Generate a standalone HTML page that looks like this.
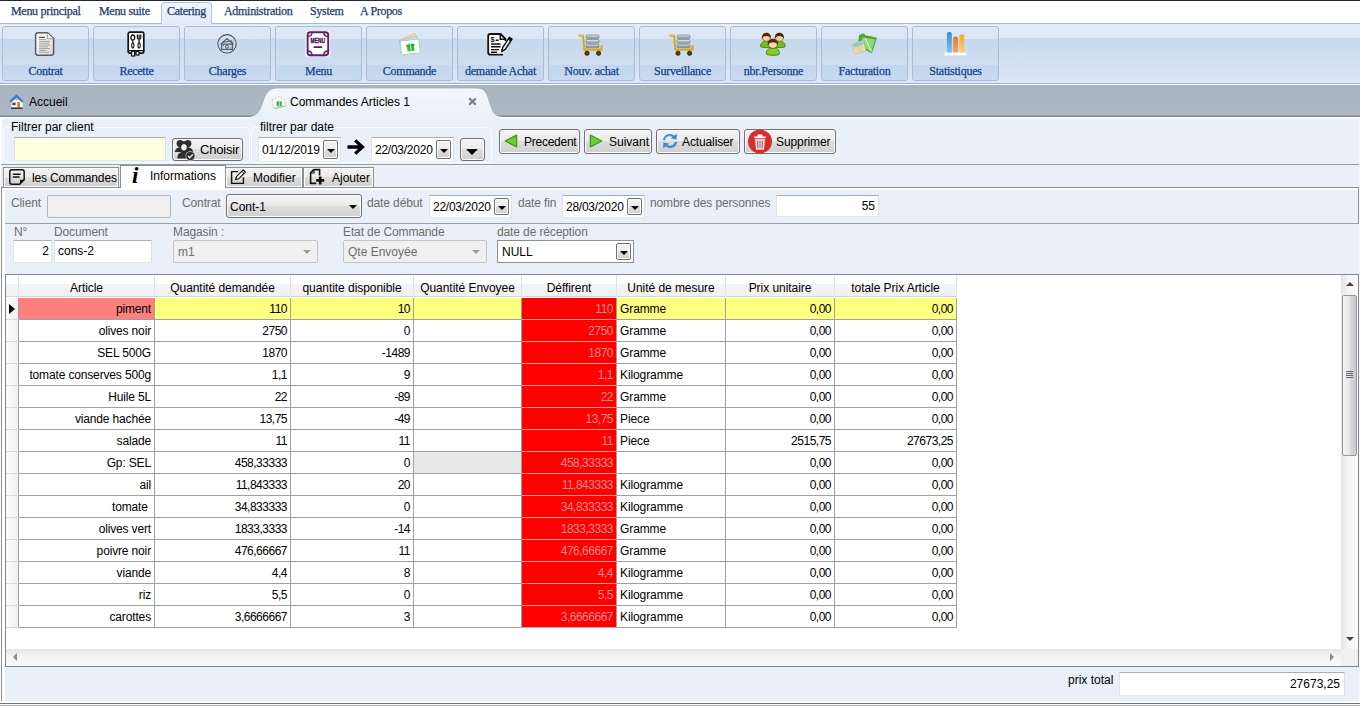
<!DOCTYPE html>
<html lang="fr">
<head>
<meta charset="utf-8">
<title>Commandes Articles 1</title>
<style>
html,body{margin:0;padding:0;}
body{width:1360px;height:706px;overflow:hidden;position:relative;background:#e9f0f9;
 font-family:"Liberation Sans",sans-serif;font-size:12px;color:#000;}
.abs{position:absolute;}
div,span{box-sizing:border-box;}
.t{position:absolute;white-space:nowrap;line-height:16px;height:16px;}

/* ---------- menu bar ---------- */
#topline{left:0;top:0;width:1360px;height:1px;background:#1f2a38;}
#menubar{left:0;top:1px;width:1360px;height:22px;background:#fff;}
.mi{position:absolute;top:3px;font-family:"Liberation Serif",serif;font-size:12px;letter-spacing:-0.3px;color:#1e3a68;-webkit-text-stroke:0.25px #1e3a68;line-height:16px;white-space:nowrap;}
#cattab{left:161px;top:2px;width:51px;height:22px;border:1px solid #b3c4db;border-bottom:none;border-radius:4px 4px 0 0;
 background:linear-gradient(#eef4fb,#e3ecf8);}

/* ---------- ribbon ---------- */
#ribbon{left:0;top:23px;width:1360px;height:61px;border-top:1px solid #a9bad2;border-bottom:1px solid #9fb0cc;
 background:linear-gradient(#e3ebf7 0,#e0e9f6 14px,#c8d9ee 14px,#dbe6f5 59px);}
.grp{position:absolute;top:26px;width:87px;height:55px;border:1px solid #abbdd6;border-radius:3px;overflow:hidden;
 background:linear-gradient(#dfe8f5 0,#dae5f4 12px,#c7d8ec 12px,#cfdef0 38px,#c2d6ee 38px,#c8daf0 53px);}
.grp .lbl{position:absolute;left:0;width:100%;top:36px;text-align:center;font-family:"Liberation Serif",serif;font-size:12px;letter-spacing:-0.25px;color:#15428b;-webkit-text-stroke:0.25px #15428b;line-height:16px;white-space:nowrap;}
.grp svg{position:absolute;}

/* ---------- doc tab strip ---------- */
#strip{left:0;top:84px;width:1360px;height:35px;background:linear-gradient(#fafdfd 0,#fafdfd 1px,#a9b4c0 1px,#adb8c5 31px,#7f8994 32px,#7f8994 33px,#fbfdff 33px);}
</style>
</head>
<body>

<div class="abs" id="menubar"></div>
<div class="abs" id="topline"></div>
<div class="abs" id="ribbon"></div>
<div class="abs" id="cattab"></div>
<span class="mi" style="left:11px;top:3px">Menu principal</span>
<span class="mi" style="left:99px;top:3px">Menu suite</span>
<span class="mi" style="left:167px;top:3px">Catering</span>
<span class="mi" style="left:224px;top:3px">Administration</span>
<span class="mi" style="left:310px;top:3px">System</span>
<span class="mi" style="left:360px;top:3px">A Propos</span>

<!-- ribbon groups -->
<div class="grp" style="left:2px"><div class="lbl">Contrat</div></div>
<div class="grp" style="left:93px"><div class="lbl">Recette</div></div>
<div class="grp" style="left:184px"><div class="lbl">Charges</div></div>
<div class="grp" style="left:275px"><div class="lbl">Menu</div></div>
<div class="grp" style="left:366px"><div class="lbl">Commande</div></div>
<div class="grp" style="left:457px"><div class="lbl">demande Achat</div></div>
<div class="grp" style="left:548px"><div class="lbl">Nouv. achat</div></div>
<div class="grp" style="left:639px"><div class="lbl">Surveillance</div></div>
<div class="grp" style="left:730px"><div class="lbl">nbr.Personne</div></div>
<div class="grp" style="left:821px"><div class="lbl">Facturation</div></div>
<div class="grp" style="left:912px"><div class="lbl">Statistiques</div></div>


<!-- ribbon icons -->
<svg class="abs" style="left:34px;top:31px" width="22" height="26" viewBox="0 0 22 26">
 <defs><linearGradient id="dg" x1="0" y1="0" x2="1" y2="1"><stop offset="0" stop-color="#ffffff"/><stop offset="1" stop-color="#d9d9d9"/></linearGradient></defs>
 <path d="M4,1.8 L13.6,1.8 L19.6,7.6 L19.6,21.8 C19.6,23.4 18.8,24.2 17.2,24.2 L4,24.2 C2.4,24.2 1.6,23.4 1.6,21.8 L1.6,4.2 C1.6,2.6 2.4,1.8 4,1.8 Z" fill="url(#dg)" stroke="#5b5b5b" stroke-width="1.5"/>
 <path d="M13.4,2 L13.4,7.8 L19.4,7.8" fill="#ededed" stroke="#8a8a8a" stroke-width="0.8"/>
 <g stroke="#9c9c9c" stroke-width="0.9">
  <path d="M5,6.4 L11,6.4" stroke="#555" stroke-width="1.2"/>
  <path d="M5,8.6 L12,8.6 M5,10.4 L16,10.4 M5,12.2 L15,12.2 M5,14 L16,14 M5,15.8 L14,15.8 M5,17.6 L16,17.6 M5,19.4 L12,19.4 M5,21.2 L15,21.2"/>
 </g>
</svg>
<svg class="abs" style="left:126px;top:30px" width="20" height="28" viewBox="0 0 20 28">
 <rect x="2.2" y="2.2" width="15.6" height="21" rx="1.6" fill="#fdfdfd" stroke="#111" stroke-width="1.7"/>
 <path d="M2.4,20.6 L17.6,20.6" stroke="#111" stroke-width="1.2"/>
 <rect x="5.6" y="21.4" width="3" height="4.6" fill="#fdfdfd" stroke="#111" stroke-width="1.2"/>
 <rect x="10" y="21.4" width="3" height="3.6" fill="#fdfdfd" stroke="#111" stroke-width="1.2"/>
 <ellipse cx="6.8" cy="7.6" rx="1.9" ry="2.6" fill="none" stroke="#111" stroke-width="1.3"/>
 <path d="M6.8,10.4 L6.8,13" stroke="#111" stroke-width="1.2"/>
 <ellipse cx="6.8" cy="15.4" rx="1.1" ry="2.6" fill="none" stroke="#111" stroke-width="1.1"/>
 <path d="M11.4,4.6 L11.4,8 C11.4,9.6 14.8,9.6 14.8,8 L14.8,4.6 M13.1,4.6 L13.1,13" fill="none" stroke="#111" stroke-width="1.2"/>
 <ellipse cx="13.1" cy="15.4" rx="1.1" ry="2.6" fill="none" stroke="#111" stroke-width="1.1"/>
</svg>
<svg class="abs" style="left:216px;top:33px" width="22" height="22" viewBox="0 0 22 22">
 <circle cx="11" cy="10.8" r="9.2" fill="none" stroke="#4e545c" stroke-width="1.1"/>
 <path d="M4.6,11.4 L11,5.6 L17.4,11.4" fill="none" stroke="#4e545c" stroke-width="1.1"/>
 <path d="M6.2,9.6 L15.8,7.8 L16.6,12" fill="none" stroke="#4e545c" stroke-width="0.9"/>
 <rect x="5.6" y="11.2" width="10.8" height="5.2" fill="none" stroke="#4e545c" stroke-width="1.1"/>
 <circle cx="11" cy="13.8" r="1.5" fill="none" stroke="#4e545c" stroke-width="0.9"/>
 <path d="M7,12.6 L8,12.6 M14,15 L15,15" stroke="#4e545c" stroke-width="0.9"/>
</svg>
<svg class="abs" style="left:305px;top:30px" width="26" height="28" viewBox="0 0 26 28">
 <rect x="0.6" y="1" width="24.6" height="25.4" fill="#fff"/>
 <rect x="2.6" y="2.2" width="20.6" height="23" rx="2.6" fill="#fff" stroke="#5d1f5d" stroke-width="1.9"/>
 <path d="M2.8,6.4 C5.6,6.4 7,5 7,2.4 M23,6.4 C20.2,6.4 18.8,5 18.8,2.4 M2.8,21 C5.6,21 7,22.4 7,25 M23,21 C20.2,21 18.8,22.4 18.8,25" fill="#c9a3c9" stroke="#5d1f5d" stroke-width="1.3"/>
 <text x="12.9" y="13.2" text-anchor="middle" font-family="Liberation Sans, sans-serif" font-weight="bold" font-size="7" fill="#4a154a" stroke="#4a154a" stroke-width="0.35" textLength="14.6" lengthAdjust="spacingAndGlyphs">MENU</text>
 <rect x="8.6" y="16.2" width="8.6" height="1.8" fill="#5d1f5d"/>
</svg>
<svg class="abs" style="left:396px;top:32px" width="28" height="26" viewBox="0 0 28 26">
 <g transform="rotate(-24 14 12)"><rect x="5" y="4.4" width="18" height="13.2" rx="1.6" fill="#ffd9a8" stroke="#f0b56c" stroke-width="0.8"/></g>
 <g transform="rotate(-14 14 13)"><rect x="5" y="6" width="18" height="13.2" rx="1.6" fill="#bfe3f2" stroke="#8cc6e0" stroke-width="0.8"/></g>
 <g transform="rotate(-7 14 14)"><rect x="4.6" y="8" width="19" height="14" rx="1.8" fill="#fff" stroke="#9bd8a2" stroke-width="0.9"/>
  <rect x="11" y="12.8" width="7" height="6.4" fill="#3db54a"/>
  <rect x="10.4" y="12.2" width="8.2" height="2" fill="#2fa23c"/>
  <rect x="14" y="12.2" width="1" height="7" fill="#b7ecbc"/>
  <path d="M14.5,12.2 C12.6,10 11.8,11.8 14.5,12.2 C17.2,11.8 16.4,10 14.5,12.2" fill="#3db54a"/>
 </g>
</svg>
<svg class="abs" style="left:486px;top:32px" width="28" height="26" viewBox="0 0 28 26">
 <path d="M17,22.6 L4.4,22.6 C3,22.6 2.2,21.8 2.2,20.4 L2.2,4.2 C2.2,2.8 3,2 4.4,2 L14.6,2 L19.4,6.8 L19.4,9" fill="#fff" stroke="#111" stroke-width="1.8" stroke-linejoin="round"/>
 <path d="M14.2,2.2 L14.2,7.2 L19.2,7.2" fill="none" stroke="#111" stroke-width="1.4"/>
 <text x="4.4" y="9.6" font-family="Liberation Sans, sans-serif" font-weight="bold" font-size="7.4" fill="#111">$</text>
 <path d="M9.6,8.2 L12.6,8.2 M5,12 L14.6,12 M5,14.8 L14.6,14.8 M5,17.6 L13,17.6 M5,20.2 L11,20.2" stroke="#111" stroke-width="1.4"/>
 <path d="M15.6,19.6 L16.8,15.4 L23.4,5.4 L26,7.2 L19.4,17.2 Z" fill="#fff" stroke="#111" stroke-width="1.5" stroke-linejoin="round"/>
 <path d="M21.8,7.6 L24.4,9.4 L25.8,7.2 L23.2,5.4 Z" fill="#111"/>
</svg>
<svg class="abs" style="left:578px;top:33px" width="26" height="24" viewBox="0 0 26 24">
 <rect x="8" y="2" width="13" height="3.6" rx="1" fill="#9aa4a8" stroke="#6f7a7e" stroke-width="0.6"/>
 <rect x="8" y="6.6" width="13" height="3.6" rx="1" fill="#aab3b7" stroke="#6f7a7e" stroke-width="0.6"/>
 <rect x="8" y="11.2" width="13" height="3.6" rx="1" fill="#8f999d" stroke="#6f7a7e" stroke-width="0.6"/>
 <path d="M8.4,3 L20.6,3 M8.4,7.6 L20.6,7.6 M8.4,12.2 L20.6,12.2" stroke="#dfe5e7" stroke-width="0.9"/>
 <path d="M1.4,2.6 L5,2.6 L6.4,16.6 L23.6,16.6 L23.6,13" fill="none" stroke="#d8a927" stroke-width="2.1" stroke-linejoin="round" stroke-linecap="round"/>
 <path d="M1.4,2.2 L5,2.2" stroke="#f3d56b" stroke-width="0.8"/>
 <circle cx="9" cy="20.2" r="2.2" fill="#5a3a12" stroke="#2e1d08" stroke-width="0.6"/>
 <circle cx="20.6" cy="20.2" r="2.2" fill="#5a3a12" stroke="#2e1d08" stroke-width="0.6"/>
</svg>
<svg class="abs" style="left:669px;top:33px" width="26" height="24" viewBox="0 0 26 24">
 <rect x="8" y="2" width="13" height="3.6" rx="1" fill="#9aa4a8" stroke="#6f7a7e" stroke-width="0.6"/>
 <rect x="8" y="6.6" width="13" height="3.6" rx="1" fill="#aab3b7" stroke="#6f7a7e" stroke-width="0.6"/>
 <rect x="8" y="11.2" width="13" height="3.6" rx="1" fill="#8f999d" stroke="#6f7a7e" stroke-width="0.6"/>
 <path d="M8.4,3 L20.6,3 M8.4,7.6 L20.6,7.6 M8.4,12.2 L20.6,12.2" stroke="#dfe5e7" stroke-width="0.9"/>
 <path d="M1.4,2.6 L5,2.6 L6.4,16.6 L23.6,16.6 L23.6,13" fill="none" stroke="#d8a927" stroke-width="2.1" stroke-linejoin="round" stroke-linecap="round"/>
 <path d="M1.4,2.2 L5,2.2" stroke="#f3d56b" stroke-width="0.8"/>
 <circle cx="9" cy="20.2" r="2.2" fill="#5a3a12" stroke="#2e1d08" stroke-width="0.6"/>
 <circle cx="20.6" cy="20.2" r="2.2" fill="#5a3a12" stroke="#2e1d08" stroke-width="0.6"/>
</svg>
<svg class="abs" style="left:759px;top:31px" width="28" height="26" viewBox="0 0 28 26">
 <g>
  <path d="M1.6,15.4 C1.6,11.6 4,10.4 7.4,10.4 C10.8,10.4 13.2,11.6 13.2,15.4 C13.2,17 1.6,17 1.6,15.4 Z" fill="#6fbf1f" stroke="#3f7d0c" stroke-width="0.9"/>
  <circle cx="7.4" cy="6.4" r="4" fill="#f6cf9c" stroke="#7a4a1a" stroke-width="0.6"/>
  <path d="M2.8,8 C1.8,-0.2 13,-0.2 12,8 C11.2,5.8 9.6,5 7.4,5 C5.2,5 3.6,5.8 2.8,8 Z" fill="#4a2c0a"/>
 </g>
 <g>
  <path d="M14.6,15.4 C14.6,11.6 17,10.4 20.4,10.4 C23.8,10.4 26.2,11.6 26.2,15.4 C26.2,17 14.6,17 14.6,15.4 Z" fill="#6fbf1f" stroke="#3f7d0c" stroke-width="0.9"/>
  <circle cx="20.4" cy="6.4" r="4" fill="#f6cf9c" stroke="#7a4a1a" stroke-width="0.6"/>
  <path d="M15.8,8 C14.8,-0.2 26,-0.2 25,8 C24.2,5.8 22.6,5 20.4,5 C18.2,5 16.6,5.8 15.8,8 Z" fill="#4a2c0a"/>
 </g>
 <g>
  <path d="M7.4,22.8 C7.4,18.4 10,17 13.9,17 C17.8,17 20.4,18.4 20.4,22.8 C20.4,24.8 7.4,24.8 7.4,22.8 Z" fill="#7fd026" stroke="#3f7d0c" stroke-width="0.9"/>
  <circle cx="13.9" cy="12.8" r="4.5" fill="#fbd9ab" stroke="#7a4a1a" stroke-width="0.6"/>
  <path d="M8.8,14.6 C7.6,5.6 20.2,5.6 19,14.6 C18,12 16.2,11.2 13.9,11.2 C11.6,11.2 9.8,12 8.8,14.6 Z" fill="#4a2c0a"/>
 </g>
</svg>
<svg class="abs" style="left:850px;top:33px" width="28" height="22" viewBox="0 0 28 22">
 <path d="M9.4,2.4 L13.4,0.8 L15.4,2.8 L26.4,5 L21.6,19.6 L8.4,13.4 Z" fill="#4cae3c" stroke="#2e8a24" stroke-width="0.7"/>
 <path d="M12.6,4.4 L25.4,6.6 L21.4,18.6 L10.6,13.4 Z" fill="#8fd870"/>
 <path d="M15,5 L21.4,18.6" stroke="#e9f7df" stroke-width="1"/>
 <g transform="translate(1.2 3.6) scale(0.84) rotate(-18 9 13)">
  <rect x="2.4" y="6.6" width="13.6" height="12.6" rx="1.2" fill="#f0e3b4" stroke="#c9b77a" stroke-width="0.7"/>
  <rect x="4" y="8" width="10.4" height="2.8" fill="#8fd0e6" stroke="#5aa7c2" stroke-width="0.5"/>
  <path d="M4,12.6 L14.4,12.6 M4,14.8 L14.4,14.8 M4,17 L14.4,17 M6.6,11.6 L6.6,18.4 M9.2,11.6 L9.2,18.4 M11.8,11.6 L11.8,18.4" stroke="#d7c588" stroke-width="0.6"/>
 </g>
</svg>
<svg class="abs" style="left:942px;top:30px" width="28" height="28" viewBox="0 0 28 28">
 <defs>
  <linearGradient id="b1" x1="0" y1="0" x2="0" y2="1"><stop offset="0" stop-color="#2f8fe0"/><stop offset="1" stop-color="#7cc3f3"/></linearGradient>
  <linearGradient id="b2" x1="0" y1="0" x2="0" y2="1"><stop offset="0" stop-color="#f0722f"/><stop offset="1" stop-color="#f7a86a"/></linearGradient>
  <linearGradient id="b3" x1="0" y1="0" x2="0" y2="1"><stop offset="0" stop-color="#f7a823"/><stop offset="1" stop-color="#fbd27a"/></linearGradient>
 </defs>
 <rect x="2.4" y="22.6" width="22.4" height="2.8" rx="1" fill="#fdfdfd" stroke="#dfe3e8" stroke-width="0.5"/>
 <rect x="5" y="2" width="4.8" height="20.6" rx="1.6" fill="url(#b1)"/>
 <rect x="11.2" y="6.6" width="4.8" height="16" rx="1.6" fill="url(#b2)"/>
 <rect x="17.4" y="4.6" width="4.8" height="18" rx="1.6" fill="url(#b3)"/>
</svg>

<div class="abs" id="strip"></div>


<style>
/* ---------- generic widgets ---------- */
.gb{position:absolute;border:1px solid #fafcff;border-radius:4px;}
.gbl{position:absolute;background:#e9f0f9;padding:0 2px;line-height:15px;white-space:nowrap;}
.inp{position:absolute;background:#fff;border:1px solid #abadb3;border-color:#abadb3 #dbdfe6 #e3e9ef #e2e3ea;line-height:15px;white-space:nowrap;}
.btn{position:absolute;border:1px solid #707070;border-radius:3px;background:linear-gradient(#f2f2f2 0,#ebebeb 50%,#dddddd 50%,#cfcfcf 100%);
 box-shadow:inset 0 0 0 1px #fcfcfc;line-height:15px;white-space:nowrap;}
.btn .bt{position:absolute;top:5px;}
.dd{position:absolute;border:1px solid #707070;border-radius:2px;background:linear-gradient(#f2f2f2 0,#ebebeb 50%,#dddddd 50%,#cfcfcf 100%);box-shadow:inset 0 0 0 1px #fcfcfc;}
.dd:after{content:"";position:absolute;left:50%;top:50%;margin:-1px 0 0 -4px;border:4px solid transparent;border-top:4px solid #000;border-bottom:none;width:0;height:0;}
.lab{position:absolute;color:#6d6d6d;white-space:nowrap;line-height:15px;letter-spacing:-0.12px;}
.stab{position:absolute;top:167px;height:20px;border:1px solid #8e8f8f;border-bottom:none;background:linear-gradient(#f2f2f2 0,#ebebeb 50%,#dddddd 50%,#cfcfcf 100%);box-shadow:inset 0 0 0 1px #fcfcfc;line-height:15px;white-space:nowrap;}
.stab span{position:absolute;top:3px;}
</style>

<!-- document tabs -->
<svg class="abs" style="left:240px;top:84px" width="280" height="35" viewBox="240 84 280 35">
 <defs><linearGradient id="tg" x1="0" y1="0" x2="0" y2="1"><stop offset="0" stop-color="#f3f7fc"/><stop offset="1" stop-color="#e9f0f9"/></linearGradient></defs>
 <path d="M248,117.5 C259,117.5 261.5,109 263.7,102.6 C266,96 267.5,89 277,89 L476.5,89 C486,89 486.5,96 488.6,102.6 C490.8,109 492,117.5 503,117.5 Z" fill="url(#tg)" stroke="#f8fbfe" stroke-width="1"/>
 <rect x="250" y="117" width="250" height="2" fill="#eaf1fa"/>
</svg>
<span class="t" style="left:29px;top:94px">Accueil</span>
<span class="t" style="left:290px;top:94px">Commandes Articles 1</span>
<svg class="abs" style="left:468px;top:97px" width="9" height="9" viewBox="0 0 9 9"><path d="M1.2,1.2 L7.8,7.8 M7.8,1.2 L1.2,7.8" stroke="#7d7d7d" stroke-width="2.1" fill="none"/></svg>


<!-- filter bar -->
<div class="gb" style="left:3px;top:127px;width:247px;height:36px"></div>
<span class="gbl" style="left:9px;top:120px">Filtrer par client</span>
<div class="inp" style="left:14px;top:137px;width:152px;height:24px;background:#ffffe1"></div>
<div class="btn" style="left:172px;top:138px;width:71px;height:23px"><span class="bt" style="left:27px;top:3px;font-size:13px;letter-spacing:-0.2px">Choisir</span></div>

<div class="gb" style="left:251px;top:127px;width:241px;height:36px"></div>
<span class="gbl" style="left:258px;top:120px">filtrer par date</span>
<div class="inp" style="left:258px;top:137px;width:83px;height:25px"><span class="abs" style="left:3px;top:5px;letter-spacing:-0.25px">01/12/2019</span></div>
<div class="dd" style="left:323px;top:140px;width:15px;height:19px"></div>
<div class="inp" style="left:371px;top:137px;width:83px;height:25px"><span class="abs" style="left:3px;top:5px;letter-spacing:-0.25px">22/03/2020</span></div>
<div class="dd" style="left:436px;top:140px;width:15px;height:19px"></div>
<div class="btn" style="left:460px;top:138px;width:25px;height:23px"></div>
<div class="abs" style="left:466px;top:149px;width:0;height:0;border:6px solid transparent;border-top:6px solid #000;border-bottom:none"></div>

<div class="btn" style="left:499px;top:129px;width:81px;height:25px"><span class="bt" style="left:24px;letter-spacing:-0.25px">Precedent</span></div>
<div class="btn" style="left:584px;top:129px;width:68px;height:25px"><span class="bt" style="left:24px">Suivant</span></div>
<div class="btn" style="left:656px;top:129px;width:84px;height:25px"><span class="bt" style="left:25px;letter-spacing:-0.12px">Actualiser</span></div>
<div class="btn" style="left:744px;top:129px;width:92px;height:25px"><span class="bt" style="left:31px;letter-spacing:-0.1px">Supprimer</span></div>

<div class="abs" style="left:1px;top:164px;width:1359px;height:1px;background:#9b9fa5"></div>

<!-- sub tabs -->
<div class="abs" style="left:1px;top:187px;width:1358px;height:1px;background:#8e8f8f"></div>
<div class="stab" style="left:3px;width:116px"><span style="left:28px;letter-spacing:-0.15px">les Commandes</span></div>
<div class="stab" style="left:225px;width:78px"><span style="left:27px">Modifier</span></div>
<div class="stab" style="left:303px;width:71px"><span style="left:28px">Ajouter</span></div>
<div class="stab" style="left:120px;top:165px;width:106px;height:23px;background:#fff;box-shadow:none"><span style="left:29px;top:3px">Informations</span></div>

<!-- icons: tab strip -->
<svg class="abs" style="left:9px;top:94px" width="16" height="16" viewBox="0 0 16 16">
 <rect x="2.5" y="6" width="11" height="7.5" fill="#fdfdfd"/>
 <path d="M1.2,8 L7.5,1.8 L13.8,8" fill="none" stroke="#3b78cc" stroke-width="2.2" stroke-linejoin="miter"/>
 <rect x="3.3" y="8.6" width="3.4" height="2.6" fill="#4a4f57"/>
 <rect x="8.3" y="8" width="2.8" height="5.6" fill="#c9822a"/>
 <rect x="2" y="13.6" width="11.6" height="1.2" fill="#1b1b1b"/>
</svg>
<svg class="abs" style="left:270px;top:95px" width="17" height="15" viewBox="0 0 17 15">
 <path d="M2,5 L9,1.5 L14.5,4.5 L15.5,11 L5,13.5 L3,12 Z" fill="#fff" stroke="#e9b98a" stroke-width="0.9" stroke-dasharray="2 1.2"/>
 <path d="M3.2,11.8 L5,13.5 L15.5,11" fill="none" stroke="#7fcf8b" stroke-width="1"/>
 <rect x="6.6" y="6.3" width="5.2" height="5" fill="#34b44a"/>
 <rect x="8.8" y="6.3" width="0.9" height="5" fill="#bff0c6"/>
</svg>

<!-- Choisir icon -->
<svg class="abs" style="left:174px;top:139px" width="22" height="22" viewBox="0 0 22 22">
 <g fill="#2e2e2e">
  <circle cx="6.2" cy="4.6" r="3.6"/><circle cx="13.8" cy="4.6" r="3.6"/>
  <path d="M0.8,12.4 C2,9 4.5,8.4 6.4,8 L13.6,8 C15.5,8.4 18,9 19.2,12.4 L19.2,13 L0.8,13 Z"/>
  <path d="M3.4,19.4 C3.4,15 5.6,13.2 10,12.6 C14.4,13.2 16.6,15 16.6,19.4 Z"/>
  <circle cx="10" cy="6.6" r="4.3"/>
 </g>
 <ellipse cx="10" cy="8.2" rx="2.7" ry="3.3" fill="#f1f1f1"/>
 <path d="M5.6,6.4 C6,2.6 14,2.6 14.4,6.4 C12.6,5.6 11.4,4.8 10,4.9 C8.6,4.8 7.4,5.6 5.6,6.4 Z" fill="#2e2e2e"/>
 <circle cx="16.4" cy="17" r="4.6" fill="#2e2e2e" stroke="#e9e9e9" stroke-width="0.6"/>
 <path d="M14.1,17 L15.8,18.8 L18.9,15.4" fill="none" stroke="#f4f4f4" stroke-width="1.3"/>
</svg>

<!-- arrow between dates -->
<svg class="abs" style="left:346px;top:138px" width="20" height="18" viewBox="0 0 20 18">
 <path d="M1.5,9 L14.6,9 M9.2,2.4 L16.4,9 L9.2,15.6" fill="none" stroke="#000" stroke-width="3.3" stroke-linejoin="miter"/>
</svg>

<!-- toolbar button icons -->
<svg class="abs" style="left:503px;top:133px" width="16" height="16" viewBox="0 0 16 16">
 <path d="M2.2,8 L13.6,2.2 L13.6,13.8 Z" fill="#6fce35" stroke="#3f9d1d" stroke-width="1.3" stroke-linejoin="round"/>
</svg>
<svg class="abs" style="left:588px;top:133px" width="16" height="16" viewBox="0 0 16 16">
 <path d="M13.8,8 L2.4,2.2 L2.4,13.8 Z" fill="#6fce35" stroke="#3f9d1d" stroke-width="1.3" stroke-linejoin="round"/>
</svg>
<svg class="abs" style="left:661px;top:132px" width="18" height="18" viewBox="0 0 18 18">
 <g fill="none" stroke="#3f86d6" stroke-width="2.3">
  <path d="M3,8.2 C3.4,4.6 6.6,2.8 9.6,3.2 C11.4,3.5 12.6,4.4 13.4,5.4"/>
  <path d="M15,9.8 C14.6,13.4 11.4,15.2 8.4,14.8 C6.6,14.5 5.4,13.6 4.6,12.6"/>
 </g>
 <path d="M15.8,1.6 L15.6,7.6 L9.8,6.6 Z" fill="#3f86d6"/>
 <path d="M2.2,16.4 L2.4,10.4 L8.2,11.4 Z" fill="#3f86d6"/>
 <path d="M4,7 C5,4.6 7.4,3.8 9.2,4" fill="none" stroke="#b9d7f5" stroke-width="0.8"/>
</svg>
<svg class="abs" style="left:747px;top:129px" width="26" height="26" viewBox="0 0 26 26">
 <circle cx="13" cy="12.6" r="12" fill="#d32f2f"/>
 <path d="M7.2,7.6 L18.8,7.6 L18.8,9.2 L7.2,9.2 Z M10.6,5.6 L15.4,5.6 L15.4,7.6 L10.6,7.6 Z" fill="#fff"/>
 <path d="M8.2,10.2 L17.8,10.2 L17,20.6 L9,20.6 Z" fill="#fff"/>
 <path d="M10.6,11.6 L10.9,19.2 M13,11.6 L13,19.2 M15.4,11.6 L15.1,19.2" stroke="#d32f2f" stroke-width="1.1" fill="none"/>
</svg>

<!-- sub-tab icons -->
<svg class="abs" style="left:8px;top:168px" width="18" height="18" viewBox="0 0 18 18">
 <path d="M4,1.8 L14,1.8 C15.4,1.8 16.2,2.6 16.2,4 L16.2,11.6 L11.6,16.2 L4,16.2 C2.6,16.2 1.8,15.4 1.8,14 L1.8,4 C1.8,2.6 2.6,1.8 4,1.8 Z" fill="none" stroke="#111" stroke-width="1.5"/>
 <path d="M16.2,11.8 L12,11.8 L12,16 Z" fill="#111"/>
 <path d="M4.8,6.2 L12.6,6.2 M4.8,9 L11.6,9" stroke="#111" stroke-width="1.4"/>
</svg>
<span class="abs" style="left:132px;top:164px;font-family:'Liberation Serif',serif;font-weight:bold;font-style:italic;font-size:23px;line-height:24px;color:#000">i</span>
<svg class="abs" style="left:230px;top:169px" width="17" height="16" viewBox="0 0 17 16">
 <path d="M8,2.6 L1.6,2.6 L1.6,14.4 L13.4,14.4 L13.4,8.6" fill="none" stroke="#111" stroke-width="1.4"/>
 <path d="M5.6,10.6 L6.4,7.6 L13.2,0.8 L15.4,3 L8.6,9.8 Z" fill="#fff" stroke="#111" stroke-width="1.1" stroke-linejoin="round"/>
 <path d="M11.8,2.2 L14,4.4" stroke="#111" stroke-width="0.9"/>
</svg>
<svg class="abs" style="left:308px;top:168px" width="18" height="18" viewBox="0 0 18 18">
 <path d="M8.2,15.4 L2.6,15.4 L2.6,4.8 L5.8,1.6 L11.6,1.6 L11.6,7.6" fill="none" stroke="#111" stroke-width="1.6" stroke-linejoin="round"/>
 <path d="M2.8,5 L6,5 L6,1.8" fill="none" stroke="#111" stroke-width="1.2"/>
 <path d="M12.2,8.4 L12.2,16.4 M8.2,12.4 L16.2,12.4" stroke="#111" stroke-width="2.6"/>
</svg>

<div class="abs" style="left:0;top:119px;width:1px;height:584px;background:#fff"></div>
<div class="abs" style="left:1px;top:119px;width:1px;height:45px;background:#fff"></div>
<!-- info panel -->
<div class="abs" style="left:2px;top:188px;width:1356px;height:2px;background:#fff"></div>
<div class="abs" style="left:1px;top:187px;width:1px;height:517px;background:#8e8f8f"></div>
<div class="abs" style="left:2px;top:188px;width:3px;height:515px;background:#fff"></div>
<div class="abs" style="left:1358px;top:187px;width:1px;height:37px;background:#8e8f8f"></div>
<div class="abs" style="left:1359px;top:117px;width:1px;height:589px;background:#f6f8fb"></div>
<div class="lab" style="left:11px;top:196px">Client</div>
<div class="inp" style="left:47px;top:195px;width:124px;height:23px;background:#f0f0f0;border-color:#b5b5b5;border-radius:2px"></div>
<div class="lab" style="left:182px;top:196px">Contrat</div>
<div class="btn" style="left:226px;top:194px;width:136px;height:24px;border-radius:3px"><span class="bt" style="left:3px;top:5px">Cont-1</span></div>
<div class="abs" style="left:349px;top:205px;width:0;height:0;border:4px solid transparent;border-top:4px solid #000;border-bottom:none"></div>
<div class="lab" style="left:367px;top:196px">date début</div>
<div class="inp" style="left:429px;top:195px;width:83px;height:23px"><span class="abs" style="left:3px;top:4px;letter-spacing:-0.25px">22/03/2020</span></div>
<div class="dd" style="left:494px;top:198px;width:15px;height:17px"></div>
<div class="lab" style="left:518px;top:196px">date fin</div>
<div class="inp" style="left:562px;top:195px;width:83px;height:23px"><span class="abs" style="left:3px;top:4px;letter-spacing:-0.25px">28/03/2020</span></div>
<div class="dd" style="left:627px;top:198px;width:15px;height:17px"></div>
<div class="lab" style="left:650px;top:196px">nombre des personnes</div>
<div class="inp" style="left:776px;top:195px;width:103px;height:22px"><span class="abs" style="right:3px;top:3px">55</span></div>

<div class="abs" style="left:5px;top:223px;width:1354px;height:1px;background:#9b9fa5"></div>

<div class="lab" style="left:14px;top:225px">N°</div>
<div class="lab" style="left:54px;top:225px">Document</div>
<div class="lab" style="left:173px;top:225px">Magasin :</div>
<div class="lab" style="left:343px;top:225px">Etat de Commande</div>
<div class="lab" style="left:497px;top:225px">date de réception</div>
<div class="inp" style="left:13px;top:240px;width:39px;height:23px"><span class="abs" style="right:2px;top:3px">2</span></div>
<div class="inp" style="left:54px;top:240px;width:98px;height:23px"><span class="abs" style="left:3px;top:3px">cons-2</span></div>
<div class="inp" style="left:173px;top:240px;width:145px;height:23px;background:#f0f0f0;border-color:#c4c4c4;border-radius:2px;color:#6d6d6d"><span class="abs" style="left:4px;top:4px">m1</span></div>
<div class="abs" style="left:303px;top:250px;width:0;height:0;border:4px solid transparent;border-top:4px solid #9a9a9a;border-bottom:none"></div>
<div class="inp" style="left:343px;top:240px;width:144px;height:23px;background:#f0f0f0;border-color:#c4c4c4;border-radius:2px;color:#6d6d6d"><span class="abs" style="left:4px;top:4px">Qte Envoyée</span></div>
<div class="abs" style="left:472px;top:250px;width:0;height:0;border:4px solid transparent;border-top:4px solid #9a9a9a;border-bottom:none"></div>
<div class="inp" style="left:497px;top:240px;width:137px;height:23px;border-color:#8e8f8f"><span class="abs" style="left:4px;top:4px">NULL</span></div>
<div class="dd" style="left:616px;top:243px;width:15px;height:17px"></div>

<!--GRID-START-->
<style>
#grid{left:5px;top:274px;width:1354px;height:393px;background:#fff;border:1px solid #828790;}
.hc{position:absolute;top:0;height:22px;border-right:1px solid #e2e3e5;border-bottom:1px solid #d5d5d5;background:linear-gradient(#ffffff 0,#ffffff 9px,#f3f4f5 9px,#f0f1f2 100%);text-align:center;line-height:26px;white-space:nowrap;letter-spacing:-0.05px;}
.rh{position:absolute;left:0;width:13px;height:22px;border-right:1px solid #a0a0a0;border-bottom:1px solid #dcdcdc;background:linear-gradient(90deg,#fdfdfd,#efefef);}
.c{position:absolute;height:22px;border-right:1px solid #a0a0a0;border-bottom:1px solid #a0a0a0;background:#fff;line-height:22px;white-space:nowrap;text-align:right;padding-right:3px;letter-spacing:-0.5px;}
.c.a{letter-spacing:-0.15px;padding-right:3px;}
.c.l{text-align:left;padding-left:3px;letter-spacing:-0.1px;}
.c.r{background:#ff0000;color:#e08c8c;border-bottom-color:#e39a9a;}
.c.y{background:#ffff80;}
</style>
<div class="abs" id="grid">
<div class="hc" style="left:0;width:13px"></div>
<div class="hc" style="left:13px;width:136px">Article</div>
<div class="hc" style="left:149px;width:136px">Quantité demandée</div>
<div class="hc" style="left:285px;width:123px">quantite disponible</div>
<div class="hc" style="left:408px;width:108px">Quantité Envoyee</div>
<div class="hc" style="left:516px;width:95px">Déffirent</div>
<div class="hc" style="left:611px;width:109px">Unité de mesure</div>
<div class="hc" style="left:720px;width:109px">Prix unitaire</div>
<div class="hc" style="left:829px;width:122px">totale Prix Article</div>
<div class="rh" style="top:23px"></div>
<div class="c a y" style="left:13px;top:23px;width:136px;background:#ff8080">piment</div>
<div class="c y" style="left:149px;top:23px;width:136px">110</div>
<div class="c y" style="left:285px;top:23px;width:123px">10</div>
<div class="c y" style="left:408px;top:23px;width:108px"></div>
<div class="c r" style="left:516px;top:23px;width:95px">110</div>
<div class="c l y" style="left:611px;top:23px;width:109px">Gramme</div>
<div class="c y" style="left:720px;top:23px;width:109px">0,00</div>
<div class="c y" style="left:829px;top:23px;width:122px">0,00</div>
<div class="rh" style="top:45px"></div>
<div class="c a" style="left:13px;top:45px;width:136px">olives noir</div>
<div class="c" style="left:149px;top:45px;width:136px">2750</div>
<div class="c" style="left:285px;top:45px;width:123px">0</div>
<div class="c" style="left:408px;top:45px;width:108px"></div>
<div class="c r" style="left:516px;top:45px;width:95px">2750</div>
<div class="c l" style="left:611px;top:45px;width:109px">Gramme</div>
<div class="c" style="left:720px;top:45px;width:109px">0,00</div>
<div class="c" style="left:829px;top:45px;width:122px">0,00</div>
<div class="rh" style="top:67px"></div>
<div class="c a" style="left:13px;top:67px;width:136px">SEL 500G</div>
<div class="c" style="left:149px;top:67px;width:136px">1870</div>
<div class="c" style="left:285px;top:67px;width:123px">-1489</div>
<div class="c" style="left:408px;top:67px;width:108px"></div>
<div class="c r" style="left:516px;top:67px;width:95px">1870</div>
<div class="c l" style="left:611px;top:67px;width:109px">Gramme</div>
<div class="c" style="left:720px;top:67px;width:109px">0,00</div>
<div class="c" style="left:829px;top:67px;width:122px">0,00</div>
<div class="rh" style="top:89px"></div>
<div class="c a" style="left:13px;top:89px;width:136px">tomate conserves 500g</div>
<div class="c" style="left:149px;top:89px;width:136px">1,1</div>
<div class="c" style="left:285px;top:89px;width:123px">9</div>
<div class="c" style="left:408px;top:89px;width:108px"></div>
<div class="c r" style="left:516px;top:89px;width:95px">1,1</div>
<div class="c l" style="left:611px;top:89px;width:109px">Kilogramme</div>
<div class="c" style="left:720px;top:89px;width:109px">0,00</div>
<div class="c" style="left:829px;top:89px;width:122px">0,00</div>
<div class="rh" style="top:111px"></div>
<div class="c a" style="left:13px;top:111px;width:136px">Huile 5L</div>
<div class="c" style="left:149px;top:111px;width:136px">22</div>
<div class="c" style="left:285px;top:111px;width:123px">-89</div>
<div class="c" style="left:408px;top:111px;width:108px"></div>
<div class="c r" style="left:516px;top:111px;width:95px">22</div>
<div class="c l" style="left:611px;top:111px;width:109px">Gramme</div>
<div class="c" style="left:720px;top:111px;width:109px">0,00</div>
<div class="c" style="left:829px;top:111px;width:122px">0,00</div>
<div class="rh" style="top:133px"></div>
<div class="c a" style="left:13px;top:133px;width:136px">viande hachée</div>
<div class="c" style="left:149px;top:133px;width:136px">13,75</div>
<div class="c" style="left:285px;top:133px;width:123px">-49</div>
<div class="c" style="left:408px;top:133px;width:108px"></div>
<div class="c r" style="left:516px;top:133px;width:95px">13,75</div>
<div class="c l" style="left:611px;top:133px;width:109px">Piece</div>
<div class="c" style="left:720px;top:133px;width:109px">0,00</div>
<div class="c" style="left:829px;top:133px;width:122px">0,00</div>
<div class="rh" style="top:155px"></div>
<div class="c a" style="left:13px;top:155px;width:136px">salade</div>
<div class="c" style="left:149px;top:155px;width:136px">11</div>
<div class="c" style="left:285px;top:155px;width:123px">11</div>
<div class="c" style="left:408px;top:155px;width:108px"></div>
<div class="c r" style="left:516px;top:155px;width:95px">11</div>
<div class="c l" style="left:611px;top:155px;width:109px">Piece</div>
<div class="c" style="left:720px;top:155px;width:109px">2515,75</div>
<div class="c" style="left:829px;top:155px;width:122px">27673,25</div>
<div class="rh" style="top:177px"></div>
<div class="c a" style="left:13px;top:177px;width:136px">Gp: SEL</div>
<div class="c" style="left:149px;top:177px;width:136px">458,33333</div>
<div class="c" style="left:285px;top:177px;width:123px">0</div>
<div class="c" style="left:408px;top:177px;width:108px;background:#e8e8e8"></div>
<div class="c r" style="left:516px;top:177px;width:95px">458,33333</div>
<div class="c l" style="left:611px;top:177px;width:109px"></div>
<div class="c" style="left:720px;top:177px;width:109px">0,00</div>
<div class="c" style="left:829px;top:177px;width:122px">0,00</div>
<div class="rh" style="top:199px"></div>
<div class="c a" style="left:13px;top:199px;width:136px">ail</div>
<div class="c" style="left:149px;top:199px;width:136px">11,843333</div>
<div class="c" style="left:285px;top:199px;width:123px">20</div>
<div class="c" style="left:408px;top:199px;width:108px"></div>
<div class="c r" style="left:516px;top:199px;width:95px">11,843333</div>
<div class="c l" style="left:611px;top:199px;width:109px">Kilogramme</div>
<div class="c" style="left:720px;top:199px;width:109px">0,00</div>
<div class="c" style="left:829px;top:199px;width:122px">0,00</div>
<div class="rh" style="top:221px"></div>
<div class="c a" style="left:13px;top:221px;width:136px">tomate&nbsp;</div>
<div class="c" style="left:149px;top:221px;width:136px">34,833333</div>
<div class="c" style="left:285px;top:221px;width:123px">0</div>
<div class="c" style="left:408px;top:221px;width:108px"></div>
<div class="c r" style="left:516px;top:221px;width:95px">34,833333</div>
<div class="c l" style="left:611px;top:221px;width:109px">Kilogramme</div>
<div class="c" style="left:720px;top:221px;width:109px">0,00</div>
<div class="c" style="left:829px;top:221px;width:122px">0,00</div>
<div class="rh" style="top:243px"></div>
<div class="c a" style="left:13px;top:243px;width:136px">olives vert</div>
<div class="c" style="left:149px;top:243px;width:136px">1833,3333</div>
<div class="c" style="left:285px;top:243px;width:123px">-14</div>
<div class="c" style="left:408px;top:243px;width:108px"></div>
<div class="c r" style="left:516px;top:243px;width:95px">1833,3333</div>
<div class="c l" style="left:611px;top:243px;width:109px">Gramme</div>
<div class="c" style="left:720px;top:243px;width:109px">0,00</div>
<div class="c" style="left:829px;top:243px;width:122px">0,00</div>
<div class="rh" style="top:265px"></div>
<div class="c a" style="left:13px;top:265px;width:136px">poivre noir</div>
<div class="c" style="left:149px;top:265px;width:136px">476,66667</div>
<div class="c" style="left:285px;top:265px;width:123px">11</div>
<div class="c" style="left:408px;top:265px;width:108px"></div>
<div class="c r" style="left:516px;top:265px;width:95px">476,66667</div>
<div class="c l" style="left:611px;top:265px;width:109px">Gramme</div>
<div class="c" style="left:720px;top:265px;width:109px">0,00</div>
<div class="c" style="left:829px;top:265px;width:122px">0,00</div>
<div class="rh" style="top:287px"></div>
<div class="c a" style="left:13px;top:287px;width:136px">viande</div>
<div class="c" style="left:149px;top:287px;width:136px">4,4</div>
<div class="c" style="left:285px;top:287px;width:123px">8</div>
<div class="c" style="left:408px;top:287px;width:108px"></div>
<div class="c r" style="left:516px;top:287px;width:95px">4,4</div>
<div class="c l" style="left:611px;top:287px;width:109px">Kilogramme</div>
<div class="c" style="left:720px;top:287px;width:109px">0,00</div>
<div class="c" style="left:829px;top:287px;width:122px">0,00</div>
<div class="rh" style="top:309px"></div>
<div class="c a" style="left:13px;top:309px;width:136px">riz</div>
<div class="c" style="left:149px;top:309px;width:136px">5,5</div>
<div class="c" style="left:285px;top:309px;width:123px">0</div>
<div class="c" style="left:408px;top:309px;width:108px"></div>
<div class="c r" style="left:516px;top:309px;width:95px">5,5</div>
<div class="c l" style="left:611px;top:309px;width:109px">Kilogramme</div>
<div class="c" style="left:720px;top:309px;width:109px">0,00</div>
<div class="c" style="left:829px;top:309px;width:122px">0,00</div>
<div class="rh" style="top:331px"></div>
<div class="c a" style="left:13px;top:331px;width:136px">carottes</div>
<div class="c" style="left:149px;top:331px;width:136px">3,6666667</div>
<div class="c" style="left:285px;top:331px;width:123px">3</div>
<div class="c" style="left:408px;top:331px;width:108px"></div>
<div class="c r" style="left:516px;top:331px;width:95px">3,6666667</div>
<div class="c l" style="left:611px;top:331px;width:109px">Kilogramme</div>
<div class="c" style="left:720px;top:331px;width:109px">0,00</div>
<div class="c" style="left:829px;top:331px;width:122px">0,00</div>
<div class="abs" style="left:3px;top:29px;width:0;height:0;border:5px solid transparent;border-left:6px solid #000;border-right:none"></div>
<div class="abs" style="left:1335px;top:0;width:17px;height:374px;background:linear-gradient(90deg,#e3e3e3,#f4f4f4 40%,#fafafa)"></div>
<div class="abs" style="left:1336px;top:20px;width:15px;height:161px;border:1px solid #979797;border-radius:2px;background:linear-gradient(90deg,#f3f3f3,#e8e8e9 50%,#d9dadc 50%,#c8c9cb)"></div>
<div class="abs" style="left:1340px;top:96px;width:7px;height:1px;background:#666;box-shadow:0 2px 0 #666,0 4px 0 #666,0 6px 0 #666"></div>
<div class="abs" style="left:1340px;top:7px;width:0;height:0;border:4px solid transparent;border-bottom:4px solid #444;border-top:none"></div>
<div class="abs" style="left:1340px;top:362px;width:0;height:0;border:4px solid transparent;border-top:4px solid #444;border-bottom:none"></div>
<div class="abs" style="left:0;top:374px;width:1335px;height:17px;background:linear-gradient(#e6e6e6,#f3f3f3 40%,#f8f8f8)"></div>
<div class="abs" style="left:1335px;top:374px;width:17px;height:17px;background:#f0f0f0"></div>
<div class="abs" style="left:7px;top:378px;width:0;height:0;border:4px solid transparent;border-right:4px solid #8a8a8a;border-left:none"></div>
<div class="abs" style="left:1324px;top:378px;width:0;height:0;border:4px solid transparent;border-left:4px solid #8a8a8a;border-right:none"></div>
</div>
<!--GRID-END-->

<!-- footer -->
<span class="t" style="left:1068px;top:672px">prix total</span>
<div class="inp" style="left:1119px;top:672px;width:226px;height:24px"><span class="abs" style="right:4px;top:4px">27673,25</span></div>
<div class="abs" style="left:0;top:701px;width:1360px;height:2px;background:#fff"></div>
<div class="abs" style="left:0;top:703px;width:1360px;height:1px;background:#70757c"></div>
<div class="abs" style="left:0;top:704px;width:1360px;height:1px;background:#fff"></div>
<div class="abs" style="left:0;top:705px;width:1360px;height:1px;background:#a9a9a9"></div>

</body>
</html>
